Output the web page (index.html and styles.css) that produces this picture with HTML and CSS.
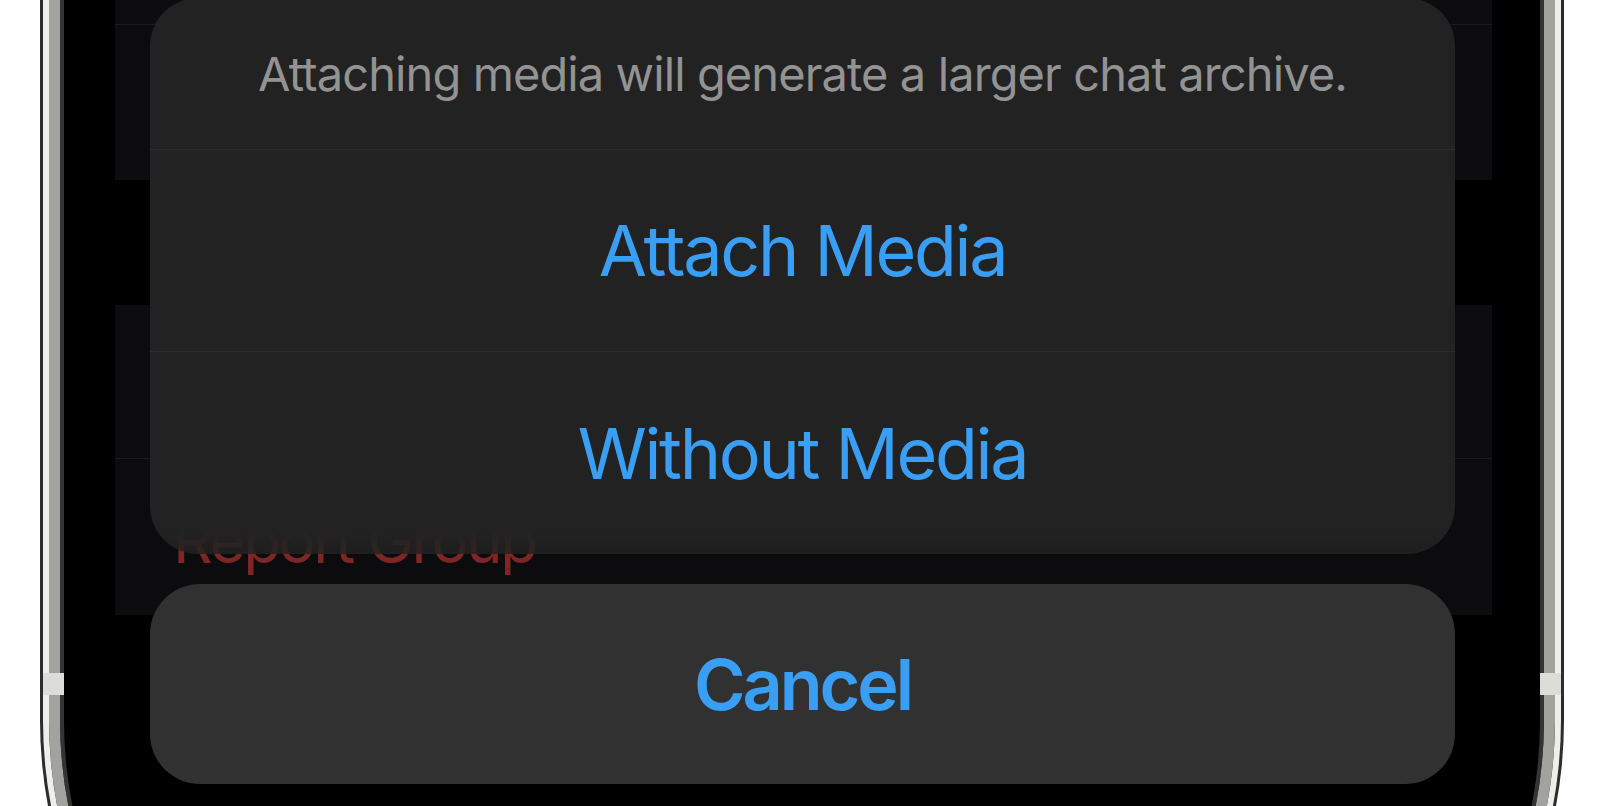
FILE: index.html
```html
<!DOCTYPE html>
<html lang="en">
<head>
<meta charset="utf-8">
<title>Export Chat</title>
<link rel="stylesheet" href="styles.css">
</head>
<body>
<div class="phone">
  <div class="frame-white">
    <div class="frame-grey">
      <div class="frame-inner">
        <div class="screen">
          <div class="list">
            <div class="list-group group-top">
              <div class="list-row row-clipped"></div>
              <div class="list-row row-fill"></div>
            </div>
            <div class="list-group group-second">
              <div class="list-row row-a"></div>
              <div class="list-row row-b"><span class="danger">Report Group</span></div>
            </div>
          </div>
          <div class="sheet-layer">
            <div class="sheet">
              <div class="sheet-message">Attaching media will generate a larger chat archive.</div>
              <div class="sheet-action">Attach Media</div>
              <div class="sheet-action">Without Media</div>
            </div>
            <div class="sheet-cancel">Cancel</div>
          </div>
        </div>
      </div>
    </div>
  </div>
  <div class="antenna antenna-left"></div>
  <div class="antenna antenna-right"></div>
</div>
</body>
</html>
```
FILE: styles.css
```css
html, body {
  margin: 0;
  padding: 0;
  background: #ffffff;
  width: 1600px;
  height: 806px;
  overflow: hidden;
  font-family: Inter, "Noto Sans", "Liberation Sans", sans-serif;
}

.phone {
  position: relative;
  margin-left: 40px;
  width: 1524px;
  height: 1186px;
  box-sizing: border-box;
  border: 3px solid #2c2c2c;
  border-top: none;
  border-radius: 0 0 466px 466px;
  background: #2c2c2c;
}

.frame-white {
  height: 100%;
  box-sizing: border-box;
  border: 6px solid #eeeeea;
  border-top: none;
  border-radius: 0 0 463px 463px;
}

.frame-grey {
  height: 100%;
  box-sizing: border-box;
  border: 11px solid #a2a39e;
  border-top: none;
  border-radius: 0 0 457px 457px;
}

.frame-inner {
  height: 100%;
  box-sizing: border-box;
  border: 4px solid #343434;
  border-top: none;
  border-radius: 0 0 446px 446px;
  overflow: hidden;
}

.screen {
  position: relative;
  height: 100%;
  background: #000000;
  overflow: hidden;
}

.antenna {
  position: absolute;
  top: 673px;
  width: 21px;
  height: 22px;
  background: #dcdcd8;
}
.antenna-left { left: 0; }
.antenna-right { right: 0; }

/* underlying list */
.list {
  display: flex;
  flex-direction: column;
  gap: 125px;
  padding: 0 48px 0 51px;
}

.list-group {
  display: flex;
  flex-direction: column;
  background: #0c0c0e;
}

.group-top { height: 180px; }
.row-clipped {
  height: 24px;
  border-bottom: 1px solid #1b1b1d;
}
.row-fill { flex: 1; }

.group-second { height: 310px; }
.row-a {
  height: 153px;
  border-bottom: 1px solid #1b1b1d;
}
.row-b {
  flex: 1;
  display: flex;
  align-items: center;
  padding-left: 58px;
  padding-top: 6px;
}

.danger {
  color: #7e2624;
  font-size: 62px;
  letter-spacing: -2.5px;
}

/* action sheet */
.sheet-layer {
  position: absolute;
  inset: 0;
  display: flex;
  flex-direction: column;
  padding: 0 85px 0 86px;
}

.sheet {
  margin-top: -2px;
  background: linear-gradient(to bottom, #222222 calc(100% - 24px), rgba(34, 34, 34, 0.82) 100%);
  border-radius: 48px;
  overflow: hidden;
  display: flex;
  flex-direction: column;
}

.sheet-message {
  height: 151px;
  border-bottom: 1px solid #2c2c2c;
  display: flex;
  align-items: center;
  justify-content: center;
  color: #939393;
  font-size: 47px;
  letter-spacing: -0.9px;
}

.sheet-action {
  height: 201px;
  display: flex;
  align-items: center;
  justify-content: center;
  color: #3a9ef4;
  font-size: 70px;
  letter-spacing: -2.3px;
}
.sheet-action + .sheet-action {
  height: 202px;
  border-top: 1px solid #2c2c2c;
}

.sheet-cancel {
  margin-top: 30px;
  height: 200px;
  border-radius: 50px;
  background: #313131;
  display: flex;
  align-items: center;
  justify-content: center;
  color: #3a9ef4;
  font-size: 70px;
  font-weight: 600;
  letter-spacing: -3px;
}
```
